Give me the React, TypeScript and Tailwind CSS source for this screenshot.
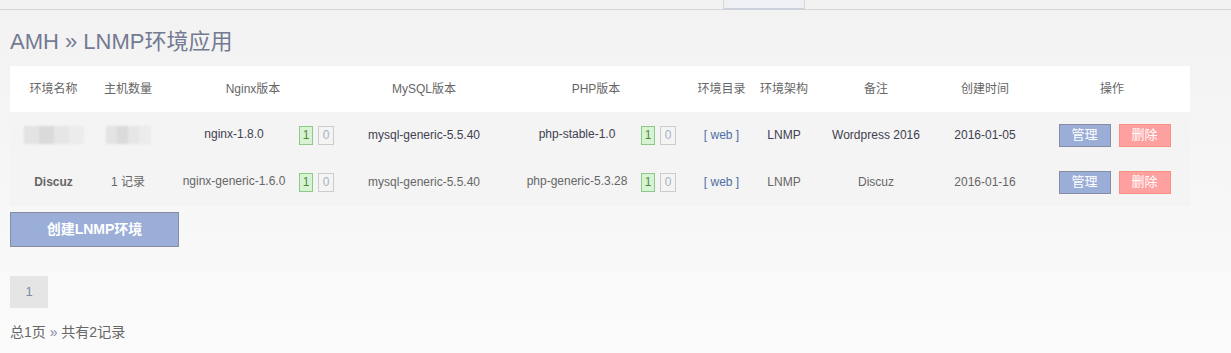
const font = { fontFamily: '"Liberation Sans", Arial, "Noto Sans CJK SC", sans-serif' };

type Row = {
  name: string;
  hosts: string;
  blurred?: boolean;
  nginx: string;
  mysql: string;
  php: string;
  note: string;
  time: string;
  dark?: boolean;
};

const rows: Row[] = [
  {
    name: '',
    hosts: '',
    blurred: true,
    nginx: 'nginx-1.8.0',
    mysql: 'mysql-generic-5.5.40',
    php: 'php-stable-1.0',
    note: 'Wordpress 2016',
    time: '2016-01-05',
    dark: true,
  },
  {
    name: 'Discuz',
    hosts: '1 记录',
    nginx: 'nginx-generic-1.6.0',
    mysql: 'mysql-generic-5.5.40',
    php: 'php-generic-5.3.28',
    note: 'Discuz',
    time: '2016-01-16',
  },
];

function Badges() {
  return (
    <div className="flex gap-[5px] shrink-0">
      <span className="w-[14px] h-[19px] flex items-center justify-center border border-[#8dc987] bg-[#d8f3d4] text-[#4d8a3c] text-[12px]">1</span>
      <span className="w-[16px] h-[19px] flex items-center justify-center border border-[#cccccc] text-[#a9b2c6] text-[12px]">0</span>
    </div>
  );
}

function Blur({ w }: { w: number }) {
  return (
    <div className="flex justify-center">
      <div className="flex h-[18px] blur-[1px]" style={{ width: w }}>
        <div className="flex-1 bg-[#e3e3e3]" />
        <div className="flex-1 bg-[#dadada]" />
        <div className="flex-1 bg-[#e6e6e6]" />
        <div className="flex-1 bg-[#ececec]" />
      </div>
    </div>
  );
}

export default function App() {
  const headers = ['环境名称', '主机数量', 'Nginx版本', 'MySQL版本', 'PHP版本', '环境目录', '环境架构', '备注', '创建时间', '操作'];
  const widths = ['w-[87px]', 'w-[62px]', 'w-[188px]', 'w-[154px]', 'w-[190px]', 'w-[61px]', 'w-[64px]', 'w-[120px]', 'w-[98px]', 'w-[156px]'];

  return (
    <div className="min-h-[353px] bg-gradient-to-b from-[#f2f2f2] to-[#fbfbfb]" style={font}>
      <div className="h-[10px] border-b border-[#d6d6d6] flex">
        <div className="ml-[723px] w-[82px] h-[10px] bg-[#eff0f4] border-x border-[#d6d6d6] border-b-2 border-b-[#cdd1dc]" />
      </div>

      <div className="px-[10px]">
        <h1 className="pt-[16px] text-[22px] leading-[32px] text-[#737a92]">AMH » LNMP环境应用</h1>

        <table className="mt-[8px] w-[1180px] table-fixed border-collapse text-[12px]">
          <thead>
            <tr className="bg-white h-[46px]">
              {headers.map((h, i) => (
                <th key={h} className={`${widths[i]} font-normal text-[#666] text-center`}>{h}</th>
              ))}
            </tr>
          </thead>
          <tbody>
            {rows.map((r, i) => {
              const color = r.dark ? 'text-[#3f4150]' : 'text-[#666]';
              return (
                <tr key={i} className={`bg-[#f4f4f4] ${i === 0 ? 'h-[46px]' : 'h-[48px]'} ${color}`}>
                  <td className="text-center font-bold">{r.blurred ? <Blur w={60} /> : r.name}</td>
                  <td className="text-center">{r.blurred ? <Blur w={45} /> : r.hosts}</td>
                  <td>
                    <div className="flex items-center pl-[10px] pr-[13px]">
                      <span className="flex-1 text-center -mt-[2px]">{r.nginx}</span>
                      <Badges />
                    </div>
                  </td>
                  <td className="text-center">{r.mysql}</td>
                  <td>
                    <div className="flex items-center pl-[12px] pr-[15px]">
                      <span className="flex-1 text-center -mt-[2px]">{r.php}</span>
                      <Badges />
                    </div>
                  </td>
                  <td className="text-center text-[#4f6fa6]">[ web ]</td>
                  <td className="text-center">LNMP</td>
                  <td className="text-center">{r.note}</td>
                  <td className="text-center">{r.time}</td>
                  <td>
                    <div className="flex justify-center gap-[8px] pl-[5px]">
                      <button className="w-[52px] h-[23px] bg-[#9aaed8] border border-[#878da0] text-white text-[13px]">管理</button>
                      <button className="w-[52px] h-[23px] bg-[#ffa0a0] border border-[#f8907f] text-white text-[13px]">删除</button>
                    </div>
                  </td>
                </tr>
              );
            })}
          </tbody>
        </table>

        <button className="mt-[6px] w-[169px] h-[35px] bg-[#9aaed8] border border-[#878da0] text-white text-[14px] font-bold">创建LNMP环境</button>

        <div className="mt-[29px] w-[38px] h-[32px] bg-[#e5e5e5] flex items-center justify-center text-[13px] text-[#7f8aa6]">1</div>

        <p className="mt-[14px] text-[14px] text-[#666]">
          总1页 <span className="text-[#7f8aa6]">»</span> 共有2记录
        </p>
      </div>
    </div>
  );
}
